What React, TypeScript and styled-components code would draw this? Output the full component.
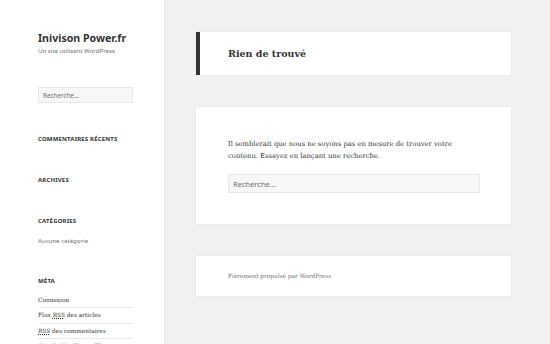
import React from "react";
import styled, { createGlobalStyle } from "styled-components";

const GlobalStyle = createGlobalStyle`
  html, body {
    margin: 0;
    padding: 0;
    background: #f1f1f1;
  }
  body {
    font-family: "Noto Sans", sans-serif;
    color: #333333;
  }
`;

const SERIF = `"DejaVu Serif", "Liberation Serif", serif`;

const Page = styled.div`
  display: flex;
  width: 550px;
  height: 344px;
  overflow: hidden;
  background: #f1f1f1;
`;

const Sidebar = styled.aside`
  flex: 0 0 164px;
  box-sizing: border-box;
  padding: 31px 31px 0 38px;
  background: #ffffff;
  box-shadow: 0 0 1px rgba(0, 0, 0, 0.15);
`;

const SiteTitle = styled.h1`
  margin: 0;
  font-size: 10.6px;
  line-height: 14px;
  font-weight: 700;
  color: #333333;
  white-space: nowrap;
`;

const Tagline = styled.p`
  margin: 1px 0 0;
  font-size: 6.1px;
  line-height: 10px;
  color: #707070;
`;

const SearchField = styled.div<{ $height: number }>`
  box-sizing: border-box;
  width: 100%;
  height: ${(p) => p.$height}px;
  display: flex;
  align-items: center;
  padding: 0 4px;
  background: #f7f7f7;
  border: 1px solid rgba(51, 51, 51, 0.08);
  font-family: "Noto Sans", sans-serif;
  font-size: ${(p) => (p.$height > 17 ? 7.5 : 6.3)}px;
  color: #707070;
`;

const SidebarSearch = styled.div`
  margin-top: 31px;
`;

const Widget = styled.section`
  margin-top: 31px;
`;

const WidgetTitle = styled.h2`
  margin: 0;
  font-size: 6px;
  line-height: 10px;
  font-weight: 700;
  letter-spacing: 0.03em;
  text-transform: uppercase;
  color: #333333;
`;

const WidgetList = styled.ul`
  list-style: none;
  margin: 6.5px 0 -2px;
  padding: 0;
`;

const WidgetItem = styled.li<{ $muted?: boolean }>`
  padding: 2px 0 1.5px;
  font-family: ${(p) => (p.$muted ? `"Noto Sans", sans-serif` : SERIF)};
  font-size: ${(p) => (p.$muted ? 6.1 : 5.8)}px;
  line-height: 11px;
  color: ${(p) => (p.$muted ? "#707070" : "#333333")};
  white-space: nowrap;

  & + & {
    border-top: 1px solid #eaeaea;
  }

  abbr {
    text-decoration: underline dotted;
    text-underline-offset: 1px;
  }
`;

const Main = styled.main`
  flex: 1;
  display: flex;
  flex-direction: column;
  gap: 32px;
  padding: 32px 39px 0 32px;
`;

const Card = styled.div`
  background: #ffffff;
  box-shadow: 0 0 1px rgba(0, 0, 0, 0.15);
`;

const HeaderCard = styled(Card)`
  height: 43px;
  display: flex;
  align-items: center;
  padding-left: 28px;
  border-left: 4px solid #333333;
`;

const PageTitle = styled.h1`
  margin: 0;
  font-family: ${SERIF};
  font-size: 9.5px;
  font-weight: 700;
  color: #333333;
`;

const ContentCard = styled(Card)`
  padding: 31px 31px 31px 32px;
`;

const Message = styled.p`
  margin: 0 0 12px;
  font-family: ${SERIF};
  font-size: 6.8px;
  line-height: 12px;
  color: #333333;
`;

const FooterCard = styled(Card)`
  height: 40px;
  display: flex;
  align-items: center;
  padding-left: 32px;
  font-family: ${SERIF};
  font-size: 5.8px;
  color: #707070;
`;

export default function App() {
  return (
    <>
      <GlobalStyle />
      <Page>
        <Sidebar>
          <SiteTitle>Inivison Power.fr</SiteTitle>
          <Tagline>Un site utilisant WordPress</Tagline>
          <SidebarSearch>
            <SearchField $height={16}>Recherche…</SearchField>
          </SidebarSearch>
          <Widget>
            <WidgetTitle>Commentaires récents</WidgetTitle>
          </Widget>
          <Widget>
            <WidgetTitle>Archives</WidgetTitle>
          </Widget>
          <Widget>
            <WidgetTitle>Catégories</WidgetTitle>
            <WidgetList>
              <WidgetItem $muted>Aucune catégorie</WidgetItem>
            </WidgetList>
          </Widget>
          <Widget>
            <WidgetTitle>Méta</WidgetTitle>
            <WidgetList>
              <WidgetItem>Connexion</WidgetItem>
              <WidgetItem>
                Flux <abbr title="Really Simple Syndication">RSS</abbr> des articles
              </WidgetItem>
              <WidgetItem>
                <abbr title="Really Simple Syndication">RSS</abbr> des commentaires
              </WidgetItem>
              <WidgetItem>Site de WordPress-FR</WidgetItem>
            </WidgetList>
          </Widget>
        </Sidebar>
        <Main>
          <HeaderCard>
            <PageTitle>Rien de trouvé</PageTitle>
          </HeaderCard>
          <ContentCard>
            <Message>
              Il semblerait que nous ne soyons pas en mesure de trouver votre
              contenu. Essayez en lançant une recherche.
            </Message>
            <SearchField $height={19}>Recherche…</SearchField>
          </ContentCard>
          <FooterCard>Fièrement propulsé par WordPress</FooterCard>
        </Main>
      </Page>
    </>
  );
}
